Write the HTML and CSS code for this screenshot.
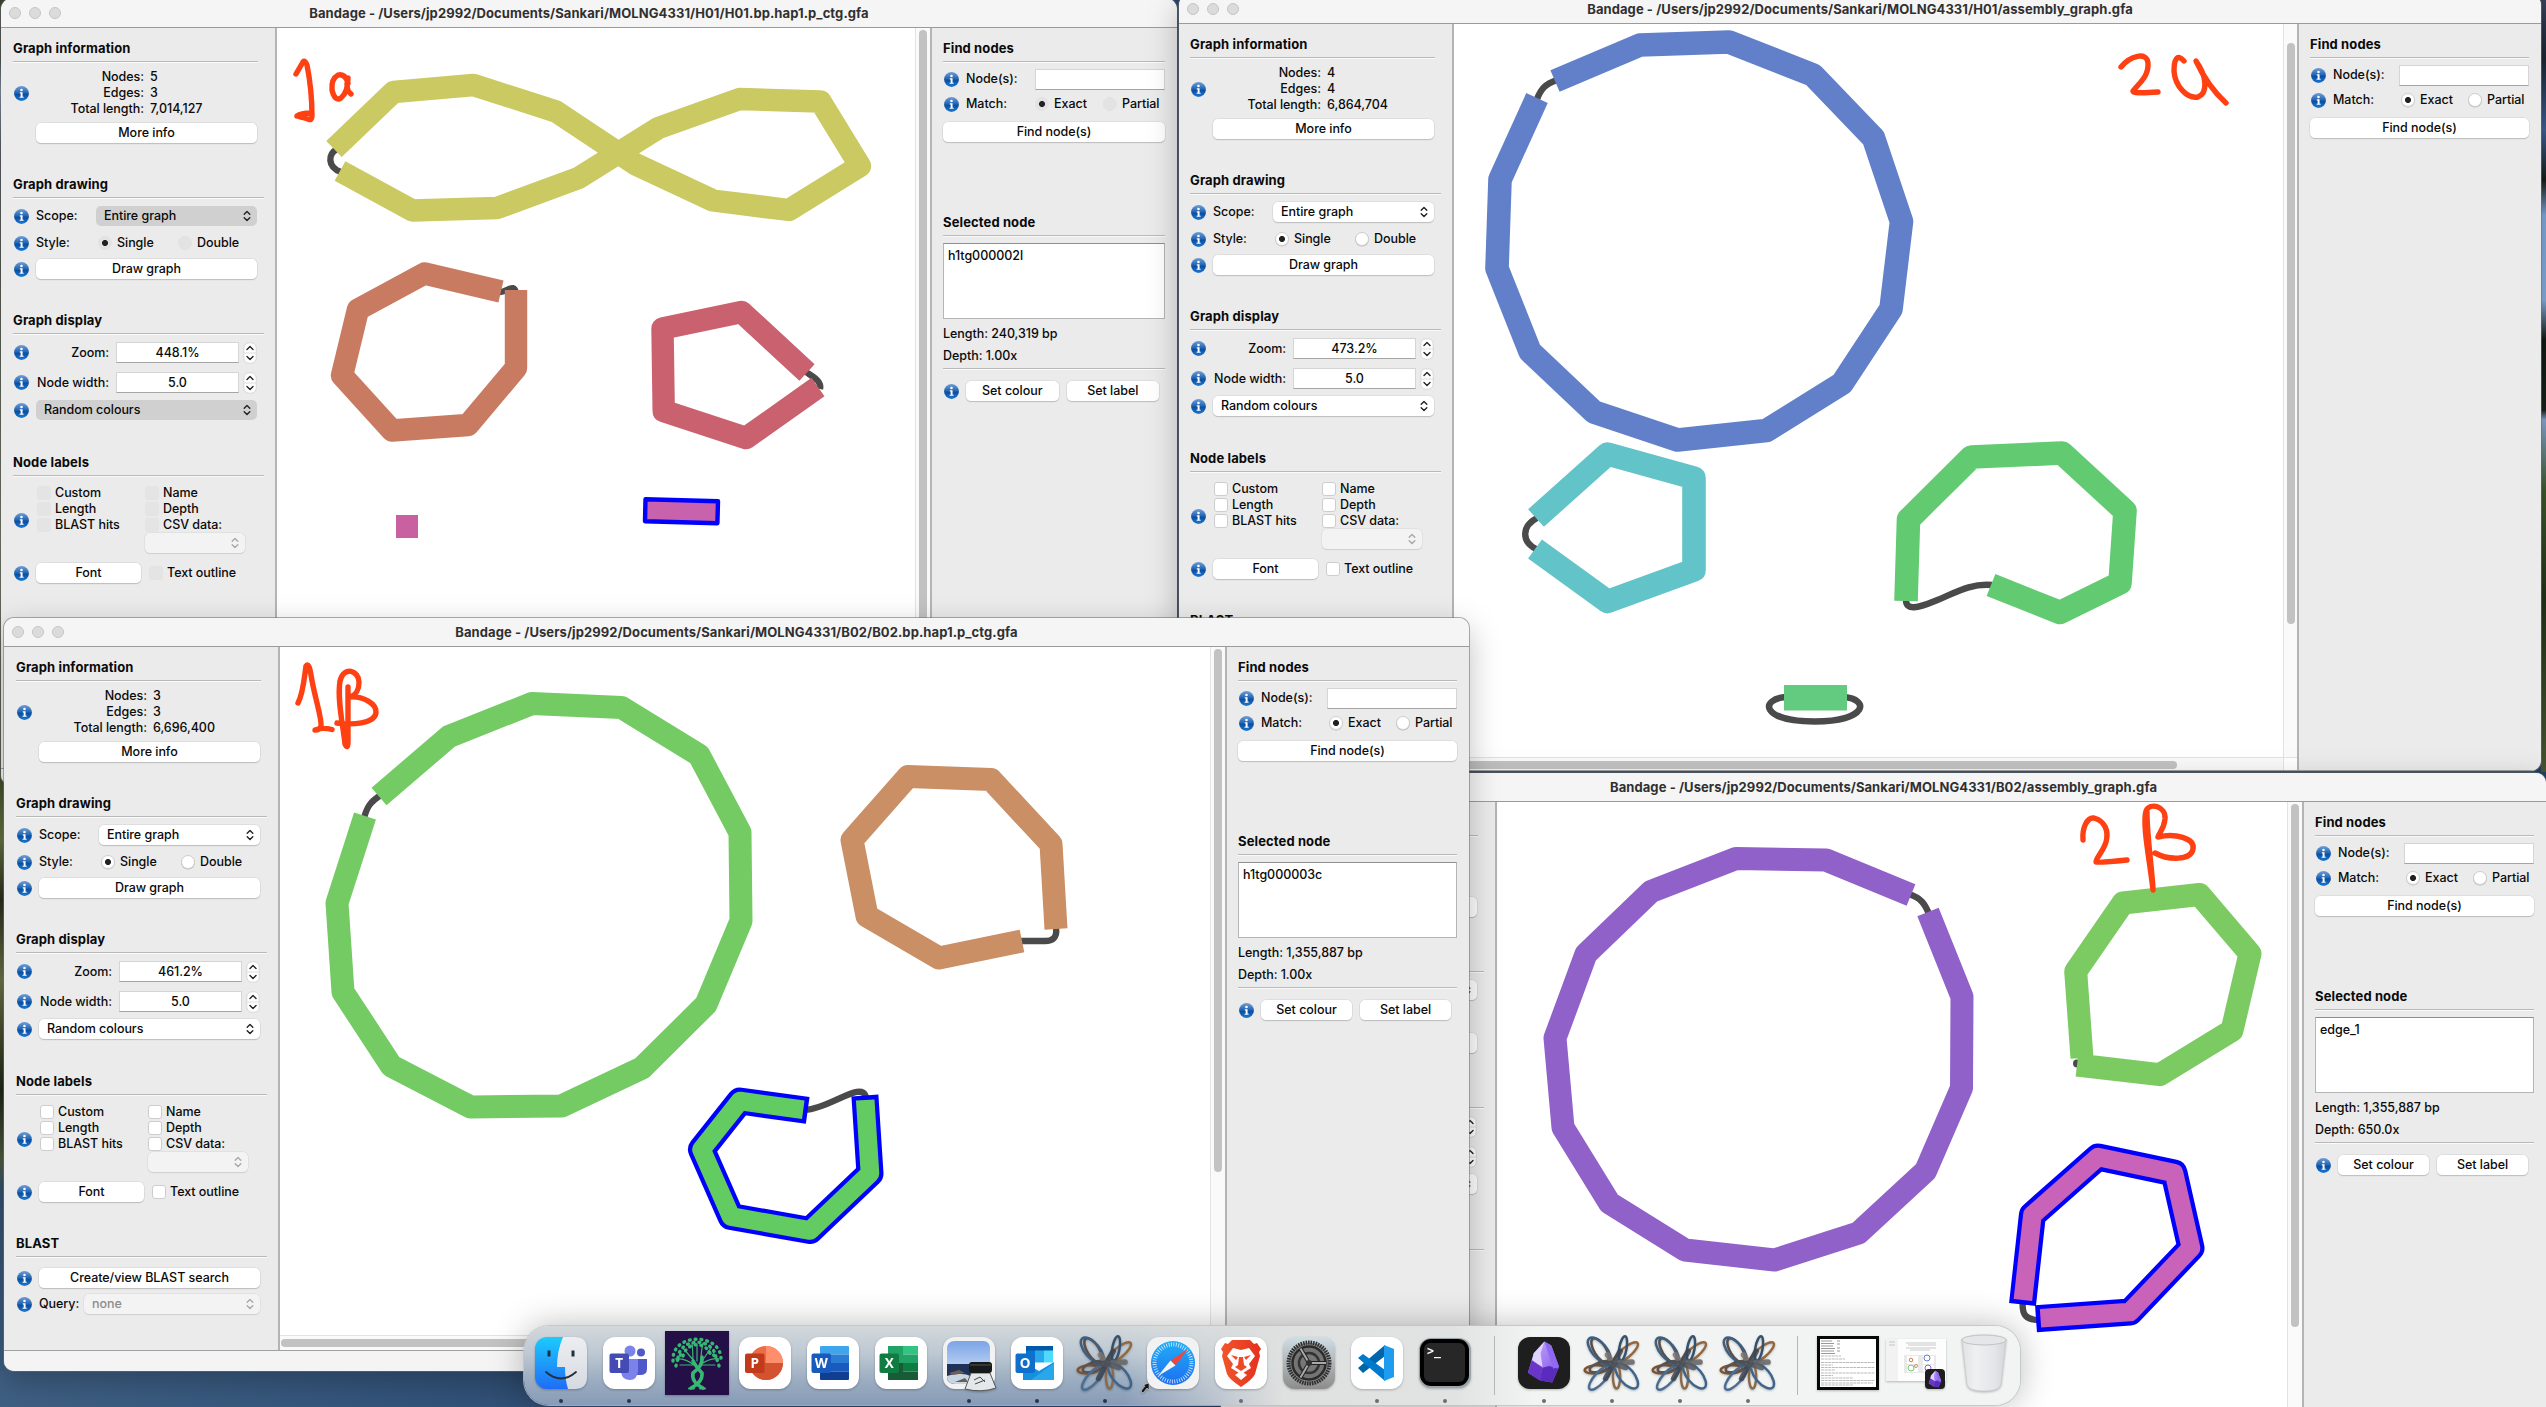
FILE: index.html
```html
<!DOCTYPE html>
<html lang="en">
<head>
<meta charset="utf-8">
<title>Bandage</title>
<link rel="stylesheet" href="styles.css">
</head>
<body>
<svg class="defs" width="0" height="0">
  <defs>
    <linearGradient id="gInfo" x1="0" y1="0" x2="0" y2="1"><stop offset="0" stop-color="#6f9ed6"/><stop offset=".45" stop-color="#2466b4"/><stop offset=".55" stop-color="#0b4ea2"/><stop offset="1" stop-color="#1c78d0"/></linearGradient>
    <linearGradient id="gFinder" x1="0" y1="0" x2="0" y2="1"><stop offset="0" stop-color="#1ccbfd"/><stop offset="1" stop-color="#1f6df6"/></linearGradient>
    <linearGradient id="gFace" x1="0" y1="0" x2="0" y2="1"><stop offset="0" stop-color="#eceef1"/><stop offset="1" stop-color="#d6dae1"/></linearGradient>
    <linearGradient id="gSafari" x1="0" y1="0" x2="0" y2="1"><stop offset="0" stop-color="#22aef6"/><stop offset="1" stop-color="#1c6ef2"/></linearGradient>
    <linearGradient id="gBrave" x1="0" y1="0" x2="1" y2="0"><stop offset="0" stop-color="#f1562b"/><stop offset="1" stop-color="#e5301f"/></linearGradient>
    <linearGradient id="gGear" x1="0" y1="0" x2="0" y2="1"><stop offset="0" stop-color="#cfdee6"/><stop offset="1" stop-color="#8d8c8b"/></linearGradient>
    <linearGradient id="gSky" x1="0" y1="0" x2="0" y2="1"><stop offset="0" stop-color="#7ba4e6"/><stop offset="1" stop-color="#b4cdf2"/></linearGradient>
    <linearGradient id="gGem" x1="0" y1="0" x2="1" y2="1"><stop offset="0" stop-color="#c9b3ff"/><stop offset="1" stop-color="#7c4ae8"/></linearGradient>
    <linearGradient id="gTrash" x1="0" y1="0" x2="1" y2="0"><stop offset="0" stop-color="#dfe1e3"/><stop offset=".3" stop-color="#eff0f2"/><stop offset=".75" stop-color="#e3e5e8"/><stop offset="1" stop-color="#d3d5d8"/></linearGradient>
    <symbol id="info" viewBox="0 0 14 14"><circle cx="7" cy="7" r="6.9" fill="url(#gInfo)"/><circle cx="7" cy="3.7" r="1.2" fill="#fff"/><path d="M5.4 5.9H8V10H9V11H5.2V10H6.2V6.9H5.4Z" fill="#fff"/></symbol>
    <symbol id="updown" viewBox="0 0 8 12"><path d="M1.2 4.2L4 1.4L6.8 4.2M1.2 7.8L4 10.6L6.8 7.8" fill="none" stroke="currentColor" stroke-width="1.4" stroke-linecap="round" stroke-linejoin="round"/></symbol>
    <symbol id="step" viewBox="0 0 14 22"><rect x=".8" y=".8" width="12.4" height="20.4" rx="5" fill="#fff" stroke="#cfcfcf" stroke-width=".8"/><path d="M1 11H13" stroke="#ddd"/><path d="M4 7.4L7 4.6L10 7.4M4 14.6L7 17.4L10 14.6" fill="none" stroke="#222" stroke-width="1.4" stroke-linecap="round" stroke-linejoin="round"/></symbol>
    <symbol id="loops" viewBox="-3 -3 68 68">
      <g fill="none" stroke-width="2.7">
        <ellipse cx="18" cy="17" rx="6.5" ry="15" transform="rotate(-32 18 17)" stroke="#5b4d47"/>
        <ellipse cx="46" cy="20" rx="5.5" ry="17" transform="rotate(50 46 20)" stroke="#94673f"/>
        <ellipse cx="13" cy="38" rx="12" ry="4.5" transform="rotate(-4 13 38)" stroke="#7d5331"/>
        <ellipse cx="36" cy="46" rx="4" ry="13" stroke="#8a6a4b"/>
        <ellipse cx="19" cy="35" rx="13" ry="5" transform="rotate(-18 19 35)" stroke="#5d5350"/>
        <ellipse cx="43" cy="15" rx="4" ry="13.5" transform="rotate(10 43 15)" stroke="#34516f"/>
        <ellipse cx="17" cy="17" rx="8" ry="17" transform="rotate(-40 17 17)" stroke="#3d5f80"/>
        <ellipse cx="18" cy="47" rx="6" ry="17" transform="rotate(42 18 47)" stroke="#4a6d93"/>
        <ellipse cx="47" cy="45" rx="8" ry="17" transform="rotate(-40 47 45)" stroke="#3f648c"/>
      </g>
      <g fill="none" stroke-width="6" stroke-linecap="round" opacity=".85"><path d="M26 22L34 34" stroke="#7c746f"/><path d="M30 31L53 30" stroke="#666"/><path d="M40 18L32 33L24 48" stroke="#3b4653"/><path d="M31 31L46 36" stroke="#555b62"/><path d="M18 31L34 32" stroke="#4b4f56"/></g>
    </symbol>
    <symbol id="gem" viewBox="0 0 36 44"><path d="M19 1L26 5L34 27L27 43L15 41L2 33L8 13Z" fill="url(#gGem)"/><path d="M19 1L8 13L6 21L17 27L15 13Z" fill="#e0d4ff"/><path d="M6 20L17 28L14 41L2 33Z" fill="#6a35c9"/><path d="M17 28L24 26L33 29L27 43L14 41Z" fill="#5a2bbd"/><path d="M19 1L26 5L34 27L28 29Z" fill="#9069f0"/></symbol>
  </defs>
</svg>

<div class="desktop">

<!-- H01, hap1 -->
<section class="window w-h01-hap inactive">
  <header class="titlebar"><div class="lights"><i></i><i></i><i></i></div><h1>Bandage - /Users/jp2992/Documents/Sankari/MOLNG4331/H01/H01.bp.hap1.p_ctg.gfa</h1></header>
  <div class="content">
    <aside class="side">
      <section>
        <h2 class="short">Graph information</h2>
        <div class="stats"><svg class="i"><use href="#info"/></svg><dl><dt>Nodes:</dt><dd>5</dd><dt>Edges:</dt><dd>3</dd><dt>Total length:</dt><dd>7,014,127</dd></dl></div>
        <div class="row indent more"><div class="btn">More info</div></div>
      </section>
      <section>
        <h2>Graph drawing</h2>
        <div class="row first"><svg class="i"><use href="#info"/></svg><span>Scope:</span><div class="select scope">Entire graph<svg class="ud"><use href="#updown"/></svg></div></div>
        <div class="row"><svg class="i"><use href="#info"/></svg><span class="lbl-style">Style:</span><i class="radio on"></i><span class="single">Single</span><i class="radio"></i><span>Double</span></div>
        <div class="row draw"><svg class="i"><use href="#info"/></svg><div class="btn">Draw graph</div></div>
      </section>
      <section>
        <h2>Graph display</h2>
        <div class="row first spin"><svg class="i"><use href="#info"/></svg><span class="num">Zoom:</span><div class="field">448.1%</div><svg class="st"><use href="#step"/></svg></div>
        <div class="row spin second"><svg class="i"><use href="#info"/></svg><span class="num">Node width:</span><div class="field">5.0</div><svg class="st"><use href="#step"/></svg></div>
        <div class="row colours"><svg class="i"><use href="#info"/></svg><div class="select full">Random colours<svg class="ud"><use href="#updown"/></svg></div></div>
      </section>
      <section>
        <h2>Node labels</h2>
        <div class="labels"><svg class="i"><use href="#info"/></svg>
          <div class="checks"><span><i class="cb"></i>Custom</span><span><i class="cb"></i>Length</span><span><i class="cb"></i>BLAST hits</span></div>
          <div class="checks"><span><i class="cb"></i>Name</span><span><i class="cb"></i>Depth</span><span><i class="cb"></i>CSV data:</span><div class="select off csv"><svg class="ud"><use href="#updown"/></svg></div></div></div>
        <div class="row font"><svg class="i"><use href="#info"/></svg><div class="btn">Font</div><i class="cb"></i><span>Text outline</span></div>
      </section>
    </aside>
    <main class="canvas">
      <svg viewBox="277 28 638 756" width="638" height="756" class="graph g1">
        <path class="edge" d="M337 149C328 154 327 167 341 172"/>
        <polyline stroke="#cac962" points="334,149 393.5,92 473.5,85 556,111.5 635,164 713,200.5 789,210 860,166 820.5,101.5 739.6,99 658.4,128 578.5,178 497,208 412.5,210.5 340,171"/>
        <path class="edge" d="M500 292C507 292 515 282 516 294"/>
        <polyline stroke="#c97b61" points="516,290 516,368 468,425 392,430.5 342,375.5 358,309.5 424.5,273.5 501,291.5"/>
        <path class="edge" d="M806 372C813 377 822 381 820 389"/>
        <polyline stroke="#ca616f" points="807,372.5 741.6,312 662.5,328.5 663.7,411 746,438 818,387"/>
        <rect x="396" y="515" width="22" height="23" fill="#c960a0"/>
        <path d="M645.5 499.2L718 501.3L717.4 523.3L645 521.3Z" fill="#c962ac" stroke="#00f" stroke-width="4.4" stroke-linejoin="round"/>
        <path class="ink" d="M296 74L303 62Q305 60 307 65Q312 90 312 116Q312 121 308 119Q300 117 297 116Q301 113 311 113"/>
        <path class="ink" d="M348 83Q345 73 338 75Q331 79 332 90Q335 102 341 98Q348 92 348 78Q345 90 351 94"/>
      </svg>
      <div class="vbar"><i class="thumb t1"></i></div>
    </main>
    <aside class="find">
      <section class="search">
        <h2>Find nodes</h2>
        <div class="row"><svg class="i"><use href="#info"/></svg><span>Node(s):</span><div class="field query"></div></div>
        <div class="row match"><svg class="i"><use href="#info"/></svg><span class="lbl-match">Match:</span><i class="radio on"></i><span class="exact">Exact</span><i class="radio"></i><span>Partial</span></div>
        <div class="row go"><div class="btn">Find node(s)</div></div>
      </section>
      <section>
        <h2>Selected node</h2>
        <div class="area">h1tg000002l</div>
        <p>Length: 240,319 bp</p>
        <p class="last">Depth: 1.00x</p>
        <div class="row acts"><svg class="i"><use href="#info"/></svg><div class="btn">Set colour</div><div class="btn">Set label</div></div>
      </section>
    </aside>
  </div>
  <footer class="status"></footer>
</section>

<!-- H01, assembly graph -->
<section class="window w-h01-asm">
  <header class="titlebar"><div class="lights"><i></i><i></i><i></i></div><h1>Bandage - /Users/jp2992/Documents/Sankari/MOLNG4331/H01/assembly_graph.gfa</h1></header>
  <div class="content">
    <aside class="side">
      <section>
        <h2 class="short">Graph information</h2>
        <div class="stats"><svg class="i"><use href="#info"/></svg><dl><dt>Nodes:</dt><dd>4</dd><dt>Edges:</dt><dd>4</dd><dt>Total length:</dt><dd>6,864,704</dd></dl></div>
        <div class="row indent more"><div class="btn">More info</div></div>
      </section>
      <section>
        <h2>Graph drawing</h2>
        <div class="row first"><svg class="i"><use href="#info"/></svg><span>Scope:</span><div class="select scope">Entire graph<svg class="ud"><use href="#updown"/></svg></div></div>
        <div class="row"><svg class="i"><use href="#info"/></svg><span class="lbl-style">Style:</span><i class="radio on"></i><span class="single">Single</span><i class="radio"></i><span>Double</span></div>
        <div class="row draw"><svg class="i"><use href="#info"/></svg><div class="btn">Draw graph</div></div>
      </section>
      <section>
        <h2>Graph display</h2>
        <div class="row first spin"><svg class="i"><use href="#info"/></svg><span class="num">Zoom:</span><div class="field">473.2%</div><svg class="st"><use href="#step"/></svg></div>
        <div class="row spin second"><svg class="i"><use href="#info"/></svg><span class="num">Node width:</span><div class="field">5.0</div><svg class="st"><use href="#step"/></svg></div>
        <div class="row colours"><svg class="i"><use href="#info"/></svg><div class="select full">Random colours<svg class="ud"><use href="#updown"/></svg></div></div>
      </section>
      <section>
        <h2>Node labels</h2>
        <div class="labels"><svg class="i"><use href="#info"/></svg>
          <div class="checks"><span><i class="cb"></i>Custom</span><span><i class="cb"></i>Length</span><span><i class="cb"></i>BLAST hits</span></div>
          <div class="checks"><span><i class="cb"></i>Name</span><span><i class="cb"></i>Depth</span><span><i class="cb"></i>CSV data:</span><div class="select off csv"><svg class="ud"><use href="#updown"/></svg></div></div></div>
        <div class="row font"><svg class="i"><use href="#info"/></svg><div class="btn">Font</div><i class="cb"></i><span>Text outline</span></div>
      </section>
      <section><h2>BLAST</h2></section>
    </aside>
    <main class="canvas scrolled">
      <svg viewBox="1454 24 829 733" width="829" height="733" class="graph g2">
        <path class="edge" d="M1557 80C1545 84 1541 89 1537 99"/>
        <polyline stroke="#6280ca" points="1555,81 1640,45 1729,42 1813,75 1873.5,138 1901.5,221.5 1891,309 1842,383.5 1766.5,430.5 1677.6,440 1594,412 1530,351.5 1497,268.5 1500,179.5 1537,98"/>
        <path class="edge" d="M1537 518C1522 526 1521 541 1536 549"/>
        <polyline stroke="#62c3c9" points="1536,518 1607.5,454 1694,478 1694,570 1607.5,601.5 1535,549"/>
        <path class="edge" d="M1906 600C1906 611 1918 608 1935 601C1955 593 1970 583 1992 585"/>
        <polyline stroke="#62cb72" points="1906,601 1908.5,519.5 1971.5,457 2062,453 2125,511 2120,583 2060,612.5 1991,585"/>
        <path class="edge" d="M1786 697C1760 699 1760 721 1814.5 721.5C1869 721 1869 699 1844 697"/>
        <rect x="1784" y="685" width="63" height="25.5" fill="#62cb80"/>
        <path class="ink" d="M2121 67C2130 56 2147 51 2148 63C2149 77 2138 84 2133 91Q2132 94 2158 92"/>
        <path class="ink" d="M2184 61C2177 53 2174 60 2174 71C2175 86 2187 99 2198 97C2208 93 2207 76 2196 61C2204 78 2216 94 2226 103"/>
      </svg>
      <div class="vbar"><i class="thumb t2"></i></div>
      <div class="hbar"><i class="thumb"></i></div><div class="corner"></div>
    </main>
    <aside class="find">
      <section class="search">
        <h2>Find nodes</h2>
        <div class="row"><svg class="i"><use href="#info"/></svg><span>Node(s):</span><div class="field query"></div></div>
        <div class="row match"><svg class="i"><use href="#info"/></svg><span class="lbl-match">Match:</span><i class="radio on"></i><span class="exact">Exact</span><i class="radio"></i><span>Partial</span></div>
        <div class="row go"><div class="btn">Find node(s)</div></div>
      </section>
    </aside>
  </div>
  <footer class="status"></footer>
</section>

<!-- B02, assembly graph -->
<section class="window w-b02-asm">
  <header class="titlebar"><div></div><h1>Bandage - /Users/jp2992/Documents/Sankari/MOLNG4331/B02/assembly_graph.gfa</h1></header>
  <div class="content">
    <aside class="side">
      <section>
        <h2 class="short"></h2>
        <div class="stats"></div>
        <div class="row indent more"><div class="btn"></div></div>
      </section>
      <section>
        <h2></h2>
        <div class="row first indent"><div class="select full"><svg class="ud"><use href="#updown"/></svg></div></div>
        <div class="row"></div>
        <div class="row draw indent"><div class="btn"></div></div>
      </section>
      <section>
        <h2></h2>
        <div class="row first spin indent"><div class="field"></div><svg class="st"><use href="#step"/></svg></div>
        <div class="row spin second indent"><div class="field"></div><svg class="st"><use href="#step"/></svg></div>
        <div class="row colours indent"><div class="select full"><svg class="ud"><use href="#updown"/></svg></div></div>
      </section>
      <section><h2></h2></section>
    </aside>
    <main class="canvas">
      <svg viewBox="1497 802 790 620" width="790" height="620" class="graph g4">
        <path class="edge" d="M1909 894C1921 898 1925 904 1929 914"/>
        <polyline stroke="#9062c9" points="1911,895 1826,860 1736,858.5 1651,891.5 1586,954 1555,1038 1563,1127.5 1609.5,1203 1685,1250 1774.5,1260 1858.5,1233 1925.6,1171 1961.5,1088 1962,996.7 1928,912"/>
        <circle cx="2077" cy="1063.5" r="4" fill="#4a4a4a"/>
        <polyline stroke="#7bca62" points="2082,1058 2075.7,971.5 2123,903 2199.5,894.5 2250,953.6 2232,1030.5 2159.7,1074.7 2077,1065"/>
        <path class="edge" d="M2023 1300C2021 1316 2027 1320 2040 1320"/>
        <polyline class="sel" points="2022.5,1304.5 2032.4,1215 2098,1157 2174,1173 2191,1248 2130,1312 2036,1318.7"/>
        <polyline class="core" stroke="#c962b9" points="2022.9,1300 2032.4,1215 2098,1157 2174,1173 2191,1248 2130,1312 2040.5,1318.3"/>
        <path class="ink" d="M2083 840C2082 828 2087 817 2094 818C2105 821 2109 831 2106 842C2103 852 2095 859 2096 862Q2098 863 2127 860"/>
        <path class="ink" d="M2153 890C2150 862 2142 824 2146 811C2150 802 2166 806 2165 819C2164 829 2159 833 2158 837C2175 833 2195 838 2193 849C2191 861 2168 860 2155 853M2147 812C2147 835 2151 860 2153 888"/>
      </svg>
      <div class="vbar"><i class="thumb t4"></i></div>
    </main>
    <aside class="find">
      <section class="search">
        <h2>Find nodes</h2>
        <div class="row"><svg class="i"><use href="#info"/></svg><span>Node(s):</span><div class="field query"></div></div>
        <div class="row match"><svg class="i"><use href="#info"/></svg><span class="lbl-match">Match:</span><i class="radio on"></i><span class="exact">Exact</span><i class="radio"></i><span>Partial</span></div>
        <div class="row go"><div class="btn">Find node(s)</div></div>
      </section>
      <section>
        <h2>Selected node</h2>
        <div class="area">edge_1</div>
        <p>Length: 1,355,887 bp</p>
        <p class="last">Depth: 650.0x</p>
        <div class="row acts"><svg class="i"><use href="#info"/></svg><div class="btn">Set colour</div><div class="btn">Set label</div></div>
      </section>
    </aside>
  </div>
</section>

<!-- B02, hap1 -->
<section class="window w-b02-hap">
  <header class="titlebar"><div class="lights"><i></i><i></i><i></i></div><h1>Bandage - /Users/jp2992/Documents/Sankari/MOLNG4331/B02/B02.bp.hap1.p_ctg.gfa</h1></header>
  <div class="content">
    <aside class="side">
      <section>
        <h2 class="short">Graph information</h2>
        <div class="stats"><svg class="i"><use href="#info"/></svg><dl><dt>Nodes:</dt><dd>3</dd><dt>Edges:</dt><dd>3</dd><dt>Total length:</dt><dd>6,696,400</dd></dl></div>
        <div class="row indent more"><div class="btn">More info</div></div>
      </section>
      <section>
        <h2>Graph drawing</h2>
        <div class="row first"><svg class="i"><use href="#info"/></svg><span>Scope:</span><div class="select scope">Entire graph<svg class="ud"><use href="#updown"/></svg></div></div>
        <div class="row"><svg class="i"><use href="#info"/></svg><span class="lbl-style">Style:</span><i class="radio on"></i><span class="single">Single</span><i class="radio"></i><span>Double</span></div>
        <div class="row draw"><svg class="i"><use href="#info"/></svg><div class="btn">Draw graph</div></div>
      </section>
      <section>
        <h2>Graph display</h2>
        <div class="row first spin"><svg class="i"><use href="#info"/></svg><span class="num">Zoom:</span><div class="field">461.2%</div><svg class="st"><use href="#step"/></svg></div>
        <div class="row spin second"><svg class="i"><use href="#info"/></svg><span class="num">Node width:</span><div class="field">5.0</div><svg class="st"><use href="#step"/></svg></div>
        <div class="row colours"><svg class="i"><use href="#info"/></svg><div class="select full">Random colours<svg class="ud"><use href="#updown"/></svg></div></div>
      </section>
      <section>
        <h2>Node labels</h2>
        <div class="labels"><svg class="i"><use href="#info"/></svg>
          <div class="checks"><span><i class="cb"></i>Custom</span><span><i class="cb"></i>Length</span><span><i class="cb"></i>BLAST hits</span></div>
          <div class="checks"><span><i class="cb"></i>Name</span><span><i class="cb"></i>Depth</span><span><i class="cb"></i>CSV data:</span><div class="select off csv"><svg class="ud"><use href="#updown"/></svg></div></div></div>
        <div class="row font"><svg class="i"><use href="#info"/></svg><div class="btn">Font</div><i class="cb"></i><span>Text outline</span></div>
      </section>
      <section>
        <h2>BLAST</h2>
        <div class="row blast"><svg class="i"><use href="#info"/></svg><div class="btn">Create/view BLAST search</div></div>
        <div class="row query-row"><svg class="i"><use href="#info"/></svg><span>Query:</span><div class="select off qsel">none<svg class="ud"><use href="#updown"/></svg></div></div>
      </section>
    </aside>
    <main class="canvas scrolled">
      <svg viewBox="280 647 930 688" width="930" height="688" class="graph g3">
        <path class="edge" d="M381 795C370 802 367 807 364 818"/>
        <polyline stroke="#74cb64" points="379,796.5 449,736.5 532,703.5 621.6,707.5 699,755 740,832.5 741,921 706,1004.5 642,1068 561.6,1106 470.6,1107 391.4,1066 343,992 337,903 365,816"/>
        <path class="edge" d="M1021 941H1043Q1058 942 1056 928"/>
        <polyline stroke="#ca8f64" points="1056,929 1051,844 991,779.5 908,776.5 852,840 867,916 939,958 1022,941"/>
        <path class="edge" d="M805 1110C830 1109 863 1079 866 1098"/>
        <polyline class="sel" points="807.7,1110.3 740,1101 701.5,1149.5 731,1216.5 810,1230.5 870,1173.5 864.9,1095.5"/>
        <polyline class="core" stroke="#62cb62" points="803.3,1109.7 740,1101 701.5,1149.5 731,1216.5 810,1230.5 870,1173.5 865.2,1100"/>
        <path class="ink" d="M298 703C303 694 304 680 306 666Q309 662 311 675C314 695 322 718 321 726Q320 730 315 730Q322 727 332 729.5"/>
        <path class="ink" d="M348 687V742Q348 750 345 744C343 725 337 700 340 681C344 665 359 671 359 682C359 692 355 695 350 697C362 696 377 703 376 713C374 724 352 725 337 723"/>
      </svg>
      <div class="vbar"><i class="thumb t3"></i></div>
      <div class="hbar"><i class="thumb"></i></div><div class="corner"></div>
    </main>
    <aside class="find">
      <section class="search">
        <h2>Find nodes</h2>
        <div class="row"><svg class="i"><use href="#info"/></svg><span>Node(s):</span><div class="field query"></div></div>
        <div class="row match"><svg class="i"><use href="#info"/></svg><span class="lbl-match">Match:</span><i class="radio on"></i><span class="exact">Exact</span><i class="radio"></i><span>Partial</span></div>
        <div class="row go"><div class="btn">Find node(s)</div></div>
      </section>
      <section>
        <h2>Selected node</h2>
        <div class="area">h1tg000003c</div>
        <p>Length: 1,355,887 bp</p>
        <p class="last">Depth: 1.00x</p>
        <div class="row acts"><svg class="i"><use href="#info"/></svg><div class="btn">Set colour</div><div class="btn">Set label</div></div>
      </section>
    </aside>
  </div>
  <footer class="status"></footer>
</section>

<nav class="dock">
  <div class="app run"><svg viewBox="0 0 52 52" width="52" height="52"><rect width="52" height="52" rx="12" fill="url(#gFinder)"/><path d="M28 0H40Q52 0 52 12V40Q52 52 40 52H33Q30 42 30 30H22Q22 14 28 0Z" fill="url(#gFace)"/><path d="M14 15V18M38 15V18" stroke="#22303c" stroke-width="3" stroke-linecap="square"/><path d="M11 35Q26 48 41 35" fill="none" stroke="#22303c" stroke-width="1.8" stroke-linecap="round"/></svg></div>
  <div class="app run"><svg viewBox="0 0 52 52" width="52" height="52"><rect width="52" height="52" rx="12" fill="#fff"/><circle cx="38" cy="15.5" r="4" fill="#5059c9"/><circle cx="27" cy="14" r="5.5" fill="#7b83eb"/><path d="M33 22H44V32Q44 38 37 38H33Z" fill="#5059c9"/><path d="M18 22H35V34Q34 43 27 43Q19 43 18 35Z" fill="#7b83eb"/><rect x="6.5" y="16.5" width="19.5" height="19.5" rx="2" fill="#444bb5"/><text x="16.2" y="31" class="glyph">T</text></svg></div>
  <div class="app"><svg viewBox="0 0 64 64" width="64" height="64"><rect width="64" height="64" fill="#240f46"/>
    <g fill="none" stroke="#35b872" stroke-linecap="round"><path d="M26 57Q38 51 37 42Q31 36 28 30" stroke-width="3.6"/><path d="M38 57Q26 51 28 42Q38 35 37 26" stroke-width="3.6"/><path d="M24 57.5H29M35 57.5H40" stroke-width="2"/><path d="M28 32Q28 20 27 12M31 35Q18 26 10 28M36 32Q36 20 38 12M35 34Q46 26 54 28M29 30L18 17M37 30L46 17M32 30V14M30 34Q20 34 15 34M36 34Q44 34 50 34" stroke-width="1.2"/></g>
    <g fill="none" stroke="#35b872" stroke-width="3.4" stroke-linecap="round" stroke-dasharray=".8 5"><path d="M8 30C6 1 58 1 56 30"/><path d="M13 27C15 6 49 6 51 27"/><path d="M18 25C22 10 42 10 46 25"/><path d="M11 35C12 28 16 22 20 21M54 35C53 28 48 22 44 21"/></g></svg></div>
  <div class="app"><svg viewBox="0 0 52 52" width="52" height="52"><rect width="52" height="52" rx="12" fill="#fff"/><circle cx="27" cy="26" r="17" fill="#ed6c47"/><path d="M27 9A17 17 0 0 1 44 26H27Z" fill="#ff8f6b"/><path d="M10 26H44A17 17 0 0 1 10 26Z" fill="#d35230"/><rect x="6" y="16.5" width="19.5" height="19.5" rx="2" fill="#c13b1b"/><text x="15.7" y="31" class="glyph">P</text></svg></div>
  <div class="app"><svg viewBox="0 0 52 52" width="52" height="52"><rect width="52" height="52" rx="12" fill="#fff"/><path d="M13 10Q13 9 14 9H41Q42 9 42 10V17.5H13Z" fill="#41a5ee"/><path d="M13 17.5H42V26H13Z" fill="#2b7cd3"/><path d="M13 26H42V34.5H13Z" fill="#185abd"/><path d="M13 34.5H42V42Q42 43 41 43H14Q13 43 13 42Z" fill="#103f91"/><rect x="4.5" y="16.5" width="19.5" height="19.5" rx="2" fill="#185abd"/><text x="14.2" y="31" class="glyph">W</text></svg></div>
  <div class="app"><svg viewBox="0 0 52 52" width="52" height="52"><rect width="52" height="52" rx="12" fill="#fff"/><path d="M13 9H28V26H13Z" fill="#21a366"/><path d="M28 9H43V17.5H28Z" fill="#33c481"/><path d="M28 17.5H43V26H28Z" fill="#21a366"/><path d="M13 26H28V35H13Z" fill="#185c37"/><path d="M28 26H43V34.5H28Z" fill="#107c41"/><path d="M13 34.5H43V43H13Z" fill="#185c37"/><rect x="4.5" y="16.5" width="19.5" height="19.5" rx="2" fill="#107c41"/><text x="14.2" y="31" class="glyph">X</text></svg></div>
  <div class="app run"><svg viewBox="0 0 52 52" width="52" height="52" class="over"><rect width="52" height="52" rx="12" fill="#f2f2f2"/><path d="M4 12Q4 4 12 4H40Q47 4 47 12V28H4Z" fill="url(#gSky)"/><path d="M4 27H47V47H12Q4 47 4 40Z" fill="#1f3358"/><path d="M4 39Q18 34 30 40L28 47H12Q4 47 4 40Z" fill="#c6d6e2"/><path d="M6 36L16 33L22 36L10 38ZM12 45L22 41L25 45Z" fill="#6f5d57"/><path d="M28 36H47L53 51Q38 56 22 52Z" fill="#e5e8ea" stroke="#555" stroke-width="1"/><path d="M31 43L37 40L42 45M32 47L42 43" stroke="#444" fill="none"/><rect x="26" y="25" width="23" height="11" rx="3" fill="#18191a"/><path d="M27 28H48" stroke="#555"/></svg></div>
  <div class="app run"><svg viewBox="0 0 52 52" width="52" height="52"><rect width="52" height="52" rx="12" fill="#fff"/><rect x="15" y="9" width="27" height="14" fill="#0358a7"/><rect x="15" y="13.5" width="9" height="12" fill="#0078d4"/><rect x="24" y="13.5" width="9" height="12" fill="#28a8ea"/><rect x="33" y="13.5" width="9" height="12" fill="#50d9ff"/><path d="M12 25L28 34L43 25V43H12Z" fill="#1490df"/><path d="M43 26V43H20Z" fill="#28a8ea"/><rect x="4.5" y="16.5" width="19.5" height="19.5" rx="2" fill="#0f6fca"/><text x="14.2" y="31" class="glyph">O</text></svg></div>
  <div class="app run"><svg width="62" height="62"><use href="#loops"/></svg></div>
  <div class="app"><svg viewBox="0 0 52 52" width="52" height="52" class="over"><rect width="52" height="52" rx="12" fill="#f2f2f2"/><circle cx="26" cy="26" r="22" fill="url(#gSafari)"/><circle cx="26" cy="26" r="18.5" fill="none" stroke="#d9ecfc" stroke-width="4" stroke-dasharray=".8 1.62"/><path d="M41 12L28.5 28.5L23.5 23.5Z" fill="#f0473d"/><path d="M11 39L23.5 23.5L28.5 28.5Z" fill="#f3f4f5"/><path d="M-6 54L-2 49L-4 48L2 46V53L0 51L-4 56Z" fill="#151515" stroke="#eee" stroke-width=".5"/></svg></div>
  <div class="app run"><svg viewBox="0 0 52 52" width="52" height="52"><rect width="52" height="52" rx="12" fill="#fff"/><path d="M17 3H35L39 7L42 6L46 12L44 15L45 19L40 37Q38 42 26 50Q14 42 12 37L7 19L8 15L6 12L10 6L13 7Z" fill="url(#gBrave)"/><path d="M26 13L34 11L40 19L34 27L36 31L28 36L26 38L24 36L16 31L18 27L12 19L18 11Z" fill="#fff"/><path d="M16 18L23 20L21 23ZM36 18L29 20L31 23ZM24 20H28L29 28L32 30L26 34L20 30L23 28Z" fill="#ef4a26"/><path d="M20 38L26 34L32 38L26 43Z" fill="#fff"/></svg></div>
  <div class="app"><svg viewBox="0 0 52 52" width="52" height="52"><rect width="52" height="52" rx="12" fill="url(#gGear)"/><circle cx="26" cy="26" r="20.5" fill="#858585" stroke="#2f2f2f" stroke-width="4" stroke-dasharray="1.6 .9"/><circle cx="26" cy="26" r="16.5" fill="#747474" stroke="#2b2b2b" stroke-width="2.5"/><circle cx="26" cy="26" r="10" fill="#777" stroke="#333" stroke-width="2.5"/><path d="M26 26H43M26 26L17.5 11.5M26 26L17.5 40.5" stroke="#222" stroke-width="4"/><path d="M26 26H43M26 26L17.5 11.5M26 26L17.5 40.5" stroke="#a9a9a9" stroke-width="2"/><circle cx="26" cy="26" r="3" fill="#333"/></svg></div>
  <div class="app run"><svg viewBox="0 0 52 52" width="52" height="52"><rect width="52" height="52" rx="12" fill="#fff"/><path d="M7 31L34 8V19L12 36Z" fill="#0065a9"/><path d="M7 21L12 17L34 33V44Z" fill="#007acc"/><path d="M33 8L43 12V40L33 44Z" fill="#1f9cf0"/></svg></div>
  <div class="app run"><svg viewBox="0 0 52 52" width="52" height="52"><rect y="1" width="52" height="50" rx="12" fill="#9aa5a9"/><rect x="1" y="2" width="49" height="47" rx="11" fill="#000"/><rect x="5" y="6" width="41" height="39" rx="6" fill="#272727"/><text x="8" y="18" class="prompt">&gt;_</text></svg></div>
  <div class="sep"></div>
  <div class="app run"><svg viewBox="0 0 52 52" width="52" height="52"><rect width="52" height="52" rx="12" fill="#1e1e1e"/><svg x="8" y="3" width="35" height="44"><use href="#gem"/></svg></svg></div>
  <div class="app run"><svg width="62" height="62"><use href="#loops"/></svg></div>
  <div class="app run"><svg width="62" height="62"><use href="#loops"/></svg></div>
  <div class="app run"><svg width="62" height="62"><use href="#loops"/></svg></div>
  <div class="sep"></div>
  <div class="app doc"><svg viewBox="0 0 62 54" width="62" height="54"><rect x="1.5" y="1.5" width="59" height="51" fill="#fff" stroke="#080808" stroke-width="3"/><g fill="none" stroke="#999" stroke-width="1"><path d="M4 5H15M4 7.5H17M4 10H16M4 12.5H18M4 15H17M4 17.5H18M20 5H23M20 8H23M20 12H23M20 15H23" stroke="#999"/><path d="M4 20H24M4 23H28M4 26.5H58M4 29H16M4 31.5H58M4 34H18M4 37H58M4 39.5H16M4 42H36M4 44.5H58M4 47H56M4 49H36" stroke="#bbb" stroke-dasharray="3 .6"/></g></svg></div>
  <div class="app note"><svg viewBox="0 0 60 52" width="60" height="52"><rect y="2" width="60" height="42" fill="#fdfdfd"/><rect y="2" width="12" height="42" fill="#f2f2f3"/><path d="M20 6H50M22 8H50M20 11H50M24 13H44M3 5H9M3 8H9" stroke="#bbb" stroke-width=".8"/><rect x="18" y="18" width="32" height="18" fill="#e9e9e9"/><g fill="#fff"><rect x="21" y="19" width="11" height="8"/><rect x="37" y="19" width="11" height="8"/><rect x="21" y="28" width="11" height="7"/><rect x="37" y="28" width="11" height="7"/></g><g fill="none"><circle cx="41" cy="21" r="3" stroke="#6280ca"/><circle cx="25" cy="31" r="3" stroke="#74cb64"/><circle cx="42" cy="31" r="3" stroke="#9062c9"/><circle cx="25" cy="23" r="1.8" stroke="#c97b61"/><circle cx="30" cy="29" r="1.5" stroke="#ca8f64"/></g><rect x="39" y="32" width="20" height="20" rx="4" fill="#1e1e1e"/><svg x="42" y="33" width="14" height="18"><use href="#gem"/></svg></svg></div>
  <div class="app trash"><svg viewBox="0 0 46 58" width="46" height="58"><path d="M1 5L6 50Q7 57 23 57Q39 57 40 50L45 5Z" fill="url(#gTrash)" stroke="#c9cbce" stroke-width=".8"/><ellipse cx="23" cy="6" rx="22" ry="5" fill="#e4e6e8" stroke="#bfc1c4"/></svg></div>
</nav>
</div>
</body>
</html>
```
FILE: styles.css
```css
* { box-sizing: border-box; }
body {
  margin: 0;
  font-family: Inter, "Liberation Sans", sans-serif;
  font-size: 12.5px;
  font-weight: 500;
  line-height: 16px;
  letter-spacing: -0.04px;
  color: #0a0a0a;
  overflow: hidden;
}
h1, h2, p, dl, dt, dd { margin: 0; }
.defs { position: absolute; }
.desktop {
  position: relative;
  width: 2546px;
  height: 1407px;
  overflow: hidden;
  background:
    linear-gradient(#35405a 0, #1b2733 60px, #3d6196 130px, #151d18 180px, #7fa9dc 215px, #86aede 300px, #111a12 340px, #18221a 410px, #87a8d4 420px, #3e5a2c 490px, #223318 600px, #4c5c33 772px) 2541px 0 / 5px 772px no-repeat,
    linear-gradient(#3a4536 0, #1c2518 60px, #7f9cc5 90px, #2b3646 150px, #28331f 280px, #5e6c48 540px, #42502e 770px, #62703f 840px, #2a2d1d 900px, #6c7047 980px, #1d2615 1090px, #4d5a40 1160px, #34506f 1190px, #3c5d82 1371px) 0 0 / 5px 1371px no-repeat,
    linear-gradient(90deg, #3f5f83, #36577d 300px, #2c4a70 700px, #244568);
}

.window {
  position: absolute;
  display: flex;
  flex-direction: column;
  overflow: hidden;
  border-radius: 10px;
  background: #ebebeb;
  box-shadow: 0 0 0 1px rgba(110, 110, 110, .55), 0 10px 32px rgba(0, 0, 0, .26);
}
.w-h01-hap { left: 1px; top: -1px; width: 1176px; height: 786px; }
.w-h01-asm { left: 1179px; top: -5px; width: 1362px; height: 776px; }
.w-b02-asm { left: 1221px; top: 773px; width: 1325px; height: 649px; }
.w-b02-hap { left: 4px; top: 618px; width: 1465px; height: 753px; }

.titlebar {
  flex: none;
  display: grid;
  grid-template-columns: 1fr auto 1fr;
  align-items: center;
  height: 29px;
  padding-bottom: 1px;
  background: #f6f5f5;
  border-bottom: 1.5px solid #9b9b9b;
}
.titlebar h1 { grid-column: 2; font-size: 13px; font-weight: 700; color: #303030; letter-spacing: .08px; white-space: nowrap; }
.lights { display: flex; gap: 8px; padding-left: 8px; }
.lights i { width: 12px; height: 12px; border-radius: 50%; background: #dcdbdb; border: 1px solid #c6c5c5; }

.content { flex: 1; display: flex; min-height: 0; }
.status { flex: none; height: 21px; background: #f4f4f4; border-top: 1.5px solid #a0a0a0; }
.w-h01-hap .status { height: 17px; }
.w-h01-asm .status { height: 0; }

.side {
  flex: none;
  width: 274px;
  padding: 11px 11px 0 12px;
  display: grid;
  grid-template-rows: 136px 136px 142px 162px auto;
  align-content: start;
}
.w-h01-asm .side { width: 273px; padding-left: 11px; }
.side h2, .find h2 {
  height: 23px;
  padding-top: 1px;
  font-size: 13px;
  font-weight: 700;
  border-bottom: 1px solid #b9b9b9;
  box-shadow: 0 1px 0 #fafafa;
  letter-spacing: .12px;
}
.side h2.short { margin-right: 6px; }

.row { display: flex; align-items: center; height: 20px; margin-top: 7px; padding-right: 7px; white-space: nowrap; }
.row.first { margin-top: 8px; }
.i { flex: none; width: 15px; height: 15px; margin: 0 7px 0 1px; }
.indent { padding-left: 23px; }
.btn {
  flex: 1;
  height: 20px;
  line-height: 19px;
  text-align: center;
  border-radius: 5px;
  background: #fff;
  box-shadow: 0 0 0 .5px #d2d2d2, 0 1px 1px #aaa;
}
.stats { display: flex; align-items: center; height: 48px; margin-top: 7px; }
.stats dl { display: grid; grid-template-columns: 108px 1fr; column-gap: 6px; }
.stats dt { text-align: right; }
.row.more { margin-top: 6px; }
.row.draw { margin-top: 6px; }

.select {
  display: flex;
  align-items: center;
  justify-content: space-between;
  height: 20px;
  padding: 0 6px 1px 8px;
  border-radius: 5px;
  background: #fff;
  box-shadow: 0 0 0 .5px #d2d2d2, 0 1px 1px #aaa;
}
.ud { width: 8px; height: 12px; margin-left: auto; color: #222; }
.scope { width: 161px; margin-left: auto; }
.full { flex: 1; }
.inactive .select { background: #d0d0d0; box-shadow: none; }
.select.off, .inactive .select.off { background: #f3f3f3; color: #8c8c8c; box-shadow: 0 0 0 .5px #d8d8d8, 0 1px 1px #c8c8c8; }
.off .ud { color: #a8a8a8; }

.radio { flex: none; width: 14px; height: 14px; border-radius: 50%; background: #fff; border: 1px solid #cfcfcf; box-shadow: 0 .5px .5px #bbb; }
.radio.on { background: radial-gradient(circle, #222 0, #222 2.7px, #fff 3.3px); }
.inactive .radio { background: #e3e3e3; border-color: #e3e3e3; box-shadow: none; }
.inactive .radio.on { background: radial-gradient(circle, #222 0, #222 2.7px, #e3e3e3 3.3px); }
.radio + span { margin-left: 5px; }
.lbl-style { width: 62px; }
.single { width: 61px; }

.spin { height: 21px; }
.row.second { margin-top: 9px; }
.num { width: 73px; text-align: right; margin-right: 7px; }
.field { flex: 1; height: 21px; line-height: 20px; text-align: center; background: #fff; border: 1px solid #d5d5d5; border-bottom-color: #a5a5a5; }
.st { width: 14px; height: 22px; margin-left: 4px; }

.labels { display: flex; align-items: center; height: 70px; margin-top: 9px; }
.checks { align-self: flex-start; width: 108px; padding-left: 1px; }
.checks > span { display: flex; align-items: center; height: 16px; gap: 4px; white-space: nowrap; }
.cb { flex: none; width: 14px; height: 14px; border-radius: 3px; background: #fff; border: 1px solid #cdcdcd; }
.inactive .cb { background: #e4e4e4; border-color: #e4e4e4; }
.csv { width: 100px; }
.row.font { margin-top: 8px; }
.font .btn { flex: none; width: 105px; margin-right: 8px; }
.font .cb { margin-right: 4px; }
.row.blast { margin-top: 11px; }
.row.query-row { margin-top: 6px; }
.qsel { width: 176px; margin-left: auto; }

.canvas {
  flex: 1;
  display: grid;
  grid-template-columns: 1fr 15px;
  grid-template-rows: 1fr;
  min-width: 0;
  background: #fff;
  border-left: 2px solid #b4b4b4;
  border-right: 2px solid #b4b4b4;
  overflow: hidden;
}
.canvas.scrolled { grid-template-rows: 1fr 15px; }
.graph { display: block; min-width: 0; }
.graph polyline { fill: none; stroke-linejoin: round; }
.g1 polyline { stroke-width: 22.4; }
.g2 polyline { stroke-width: 23.6; }
.g3 polyline, .g4 polyline { stroke-width: 23; }
.graph .edge { fill: none; stroke: #4a4a4a; stroke-width: 6.4; }
.graph polyline.sel { stroke: #00f; stroke-width: 27; }
.graph polyline.core { stroke-width: 18.6; }
.graph .ink { fill: none; stroke: #ff4013; stroke-width: 5.4; stroke-linecap: round; stroke-linejoin: round; }
.vbar { background: #fafafa; border-left: 1px solid #e3e3e3; padding: 2px 0 0 3px; }
.vbar .thumb { display: block; width: 8px; border-radius: 4px; background: #c2c2c2; }
.t1 { height: 740px; }
.t2 { height: 581px; margin-top: 17px; }
.t3 { height: 523px; }
.t4 { height: 523px; }
.hbar { background: #fafafa; border-top: 1px solid #e3e3e3; padding: 3px 2px 0 1px; overflow: hidden; }
.hbar .thumb { display: block; width: 722px; height: 8px; border-radius: 4px; background: #c2c2c2; }
.w-b02-hap .hbar .thumb { width: 800px; }
.corner { border-left: 1px solid #e3e3e3; border-top: 1px solid #e3e3e3; }

.find { flex: none; width: 242px; padding: 11px 12px 0 11px; }
.w-h01-hap .find { width: 245px; }
.find .row { padding-right: 0; }
.find .search { height: 174px; }
.find .query { flex: none; width: 130px; margin-left: auto; height: 21px; }
.find .match { margin-top: 5px; }
.find .go { margin-top: 8px; }
.lbl-match { width: 68px; }
.exact { width: 48px; }
.w-h01-hap .lbl-match { width: 69px; }
.w-h01-hap .exact { width: 49px; }
.area { height: 76px; margin-top: 7px; padding: 4px 4px; background: #fff; border: 1px solid #b5b5b5; border-top-color: #8f8f8f; }
.find p { height: 22px; line-height: 22px; margin-top: 4px; }
.find p + p { margin-top: 0; }
.find p.last { height: 24px; border-bottom: 1px solid #b9b9b9; box-shadow: 0 1px 0 #fafafa; }
.find .acts { margin-top: 12px; padding-right: 6px; gap: 8px; }
.find .acts .i { margin-right: -1px; }

.dock {
  position: absolute;
  left: 524px;
  top: 1326px;
  width: 1496px;
  height: 79px;
  display: flex;
  align-items: flex-start;
  padding: 0 0 0 3px;
  border-radius: 25px;
  background:
    linear-gradient(90deg, rgba(225, 227, 227, 0) 600px, #dfe1e0 760px, #e0e3e2 930px, #f2f4f3 1010px),
    linear-gradient(#d3d8db 0, #bdc8d2 35%, #9aacc0 70%, #889bb7 100%);
  box-shadow: 0 0 0 1px rgba(190, 195, 198, .8), 0 0 34px rgba(0, 0, 0, .28);
}
.app { flex: none; width: 68px; height: 79px; display: grid; grid-template-rows: 74px 5px; justify-items: center; align-items: center; }
.app > svg { filter: drop-shadow(0 1px 1px rgba(0, 0, 0, .25)); }
.app > svg.over { overflow: visible; }
.app.run::after { content: ""; width: 4px; height: 4px; margin-top: -3px; border-radius: 50%; background: #26364a; }
.app.run:nth-child(n+11)::after { background: #6b6d6e; }
.sep { flex: none; width: 31px; height: 79px; padding: 10px 15px; }
.sep::before { content: ""; display: block; width: 1px; height: 59px; background: #b4b6b7; }
.app.doc { width: 70px; }
.app.note { width: 66px; }
.app.trash { width: 70px; }
.glyph { font: 700 13.5px "Open Sans", sans-serif; fill: #fff; text-anchor: middle; }
.prompt { font: 700 11.5px "DejaVu Sans Mono", monospace; fill: #fff; }
```
